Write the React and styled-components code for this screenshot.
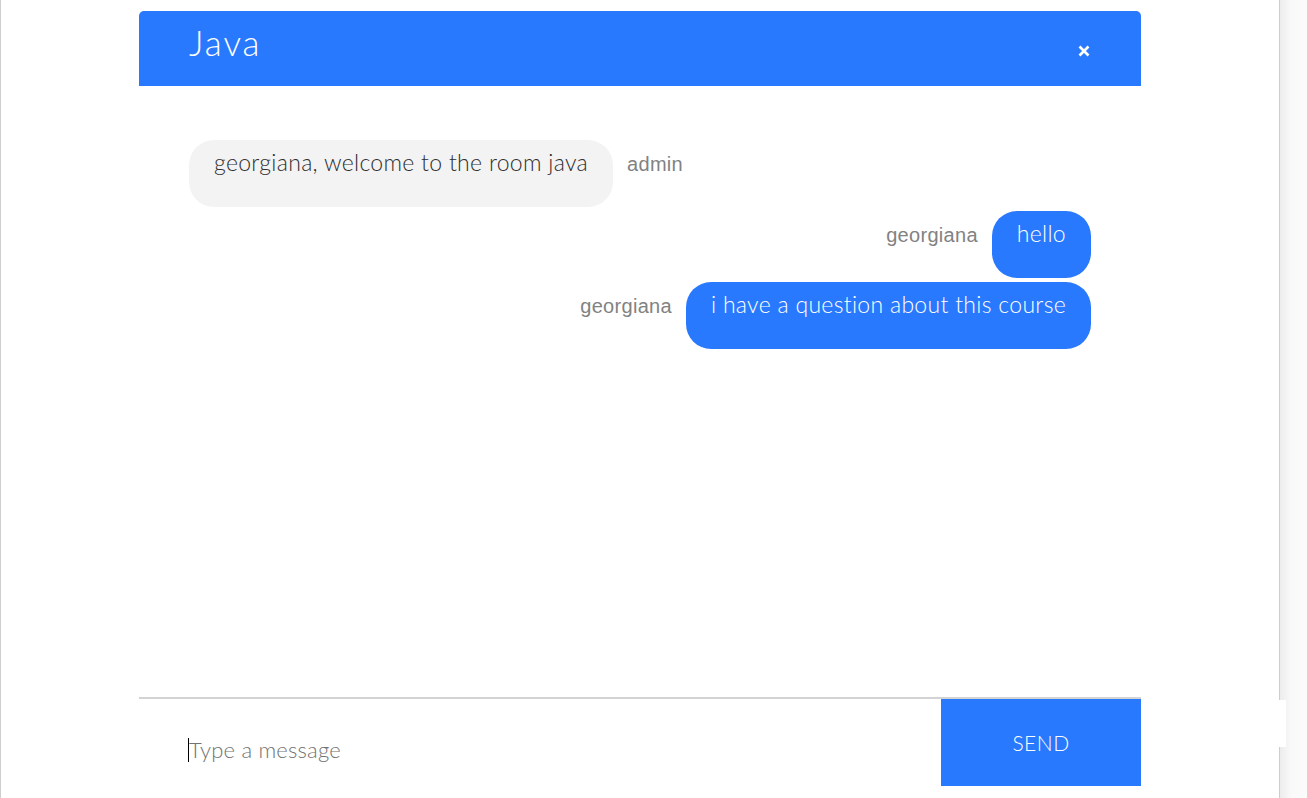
import React from "react";
import styled, { createGlobalStyle } from "styled-components";

const Global = createGlobalStyle`
  html, body { margin: 0; padding: 0; background: #fff; }
  body { font-family: Lato, "Open Sans", sans-serif; overflow: hidden; }
  input:focus { outline: none; }
`;

const Screen = styled.div`
  display: flex;
  height: 798px;
  width: 1307px;
`;

const Page = styled.div`
  flex: 1;
  display: flex;
  justify-content: center;
  border-left: 1px solid #cfcfcf;
  padding-top: 11px;
  padding-bottom: 12px;
  box-sizing: border-box;
`;

const ScrollStrip = styled.div`
  position: relative;
  width: 27px;
  border-left: 1px solid #cdcdcd;
  background: linear-gradient(to right, #ececec, #f9f9f9 40%, #fbfbfb);
`;

const Patch = styled.div`
  position: absolute;
  left: -14px;
  top: 700px;
  width: 20px;
  height: 47px;
  background: #fff;
`;

const Container = styled.div`
  width: 1002px;
  display: flex;
  flex-direction: column;
  background: #fff;
`;

const InfoBar = styled.div`
  height: 75px;
  flex: none;
  display: flex;
  justify-content: space-between;
  align-items: flex-start;
  background: #2979ff;
  border-radius: 5px 5px 0 0;
  padding: 0 50px;
`;

const Title = styled.h2`
  margin: 0;
  padding-top: 14px;
  font-weight: 300;
  font-size: 35px;
  line-height: 34px;
  letter-spacing: 2px;
  color: #fff;
`;

const CloseButton = styled.button`
  border: none;
  background: none;
  padding: 0;
  margin-top: 33px;
  width: 14px;
  height: 14px;
  display: flex;
  align-items: center;
  justify-content: center;
  cursor: pointer;
`;

const Messages = styled.div`
  flex: 1;
  padding: 50px 0;
  display: flex;
  flex-direction: column;
`;

const MessageRow = styled.div`
  display: flex;
  align-items: baseline;
  justify-content: ${(p) => (p.$mine ? "flex-end" : "flex-start")};
  padding: 0 50px;
  margin-top: 4px;
`;

const Bubble = styled.div`
  background: ${(p) => (p.$mine ? "#2979ff" : "#f3f3f3")};
  color: ${(p) => (p.$mine ? "#fff" : "#2e2e2e")};
  border-radius: 25px;
  padding: 8px 25px 31px;
  font-size: 23px;
  font-weight: 300;
  line-height: 28px;
  letter-spacing: 0.3px;
  max-width: 80%;
`;

const SentText = styled.span`
  font-family: "Liberation Sans", Arial, sans-serif;
  font-size: 20px;
  color: #828282;
  letter-spacing: 0.3px;
  padding-left: ${(p) => (p.$left ? "14px" : "0")};
  padding-right: ${(p) => (p.$right ? "14px" : "0")};
`;

const Form = styled.form`
  display: flex;
  border-top: 2px solid #d3d3d3;
  height: 89px;
  box-sizing: border-box;
  margin: 0;
`;

const InputWrap = styled.div`
  position: relative;
  flex: 1;
  display: flex;
`;

const Input = styled.input`
  flex: 1;
  border: none;
  border-radius: 0;
  padding: 14px 0 0 50px;
  font-family: Lato, sans-serif;
  font-size: 22px;
  font-weight: 300;
  letter-spacing: 0.2px;
  color: #333;
  caret-color: transparent;
  &::placeholder { color: #727272; }
`;

const Caret = styled.span`
  position: absolute;
  left: 49px;
  top: 39px;
  width: 1px;
  height: 24px;
  background: #000;
  pointer-events: none;
`;

const SendButton = styled.button`
  width: 200px;
  border: none;
  background: #2979ff;
  color: #fff;
  font-family: Lato, sans-serif;
  font-size: 21px;
  font-weight: 300;
  text-transform: uppercase;
  letter-spacing: 0.5px;
  padding: 0;
  cursor: pointer;
`;

const CloseIcon = () => (
  <svg width="12" height="12" viewBox="0 0 12 12">
    <path d="M1.5 1.5 L10.5 10.5 M10.5 1.5 L1.5 10.5" stroke="#fff" strokeWidth="2.6" strokeLinecap="butt" />
  </svg>
);

const messages = [
  { user: "admin", text: "georgiana, welcome to the room java", mine: false },
  { user: "georgiana", text: "hello", mine: true },
  { user: "georgiana", text: "i have a question about this course", mine: true },
];

export default function App() {
  return (
    <>
      <Global />
      <Screen>
        <Page>
          <Container>
            <InfoBar>
              <Title>Java</Title>
              <CloseButton aria-label="close">
                <CloseIcon />
              </CloseButton>
            </InfoBar>
            <Messages>
              {messages.map((m, i) =>
                m.mine ? (
                  <MessageRow key={i} $mine>
                    <SentText $right>{m.user}</SentText>
                    <Bubble $mine>{m.text}</Bubble>
                  </MessageRow>
                ) : (
                  <MessageRow key={i}>
                    <Bubble>{m.text}</Bubble>
                    <SentText $left>{m.user}</SentText>
                  </MessageRow>
                )
              )}
            </Messages>
            <Form onSubmit={(e) => e.preventDefault()}>
              <InputWrap>
                <Input type="text" placeholder="Type a message" />
                <Caret />
              </InputWrap>
              <SendButton type="submit">Send</SendButton>
            </Form>
          </Container>
        </Page>
        <ScrollStrip>
          <Patch />
        </ScrollStrip>
      </Screen>
    </>
  );
}
